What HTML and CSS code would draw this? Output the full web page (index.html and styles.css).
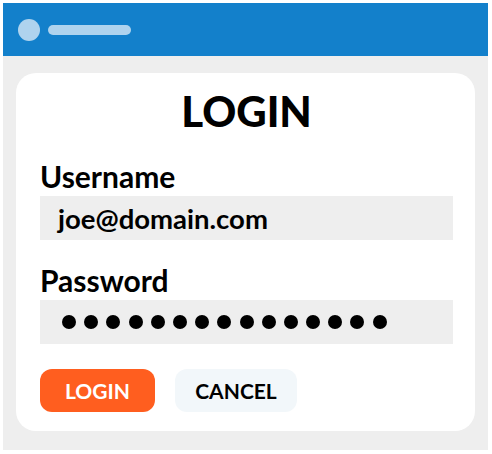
FILE: index.html
```html
<!DOCTYPE html>
<html>
<head>
<meta charset="utf-8">
<link rel="stylesheet" href="styles.css">
</head>
<body>
<div class="window">
  <div class="titlebar">
    <span class="dot"></span>
    <span class="pill"></span>
  </div>
  <div class="card">
    <h1 class="title">LOGIN</h1>
    <div class="label label-user">Username</div>
    <div class="field">joe@domain.com</div>
    <div class="label label-pass">Password</div>
    <div class="field field-pass">
      <span class="bullet"></span><span class="bullet"></span><span class="bullet"></span><span class="bullet"></span><span class="bullet"></span>
      <span class="bullet"></span><span class="bullet"></span><span class="bullet"></span><span class="bullet"></span><span class="bullet"></span>
      <span class="bullet"></span><span class="bullet"></span><span class="bullet"></span><span class="bullet"></span><span class="bullet"></span>
    </div>
    <div class="actions">
      <button class="btn btn-login">LOGIN</button>
      <button class="btn btn-cancel">CANCEL</button>
    </div>
  </div>
</div>
</body>
</html>
```

FILE: styles.css
```css
html, body {
  margin: 0;
  padding: 0;
  background: #ffffff;
}
body {
  font-family: Lato, "Noto Sans", sans-serif;
  color: #000;
}
.window {
  margin: 3px 0 0 3px;
  width: 485px;
  height: 447px;
  background: #eeeeee;
  display: flex;
  flex-direction: column;
}
.titlebar {
  height: 53px;
  background: #1380cb;
  display: flex;
  align-items: center;
  padding-left: 15px;
  gap: 8px;
  flex-shrink: 0;
}
.dot {
  width: 22px;
  height: 22px;
  border-radius: 50%;
  background: #afd3ee;
}
.pill {
  width: 83px;
  height: 10px;
  border-radius: 5px;
  background: #afd3ee;
}
.card {
  margin: 17px 13px 0 13px;
  height: 358px;
  box-sizing: border-box;
  background: #ffffff;
  border-radius: 20px;
  padding: 14px 22px 0 24px;
}
.title {
  margin: 0;
  text-align: center;
  font-size: 42px;
  line-height: 48px;
  font-weight: 900;
}
.label {
  font-size: 30px;
  line-height: 34px;
  font-weight: 700;
}
.label-user {
  margin-top: 24px;
}
.label-pass {
  margin-top: 23px;
}
.field {
  margin-top: 3px;
  height: 44px;
  background: #eeeeee;
  display: flex;
  align-items: center;
  padding-left: 18px;
  font-size: 27.5px;
  font-weight: 700;
}
.field-pass {
  padding-left: 22px;
  gap: 8.2px;
}
.bullet {
  width: 14px;
  height: 14px;
  border-radius: 50%;
  background: #000;
  flex-shrink: 0;
}
.actions {
  margin-top: 25px;
  display: flex;
  gap: 20px;
}
.btn {
  height: 43px;
  border: none;
  border-radius: 12px;
  font-family: Lato, "Noto Sans", sans-serif;
  font-size: 21px;
  font-weight: 700;
  padding: 0;
}
.btn-login {
  width: 115px;
  background: #ff5e1f;
  color: #ffffff;
}
.btn-cancel {
  width: 122px;
  background: #f2f7fa;
  color: #000;
}
```
